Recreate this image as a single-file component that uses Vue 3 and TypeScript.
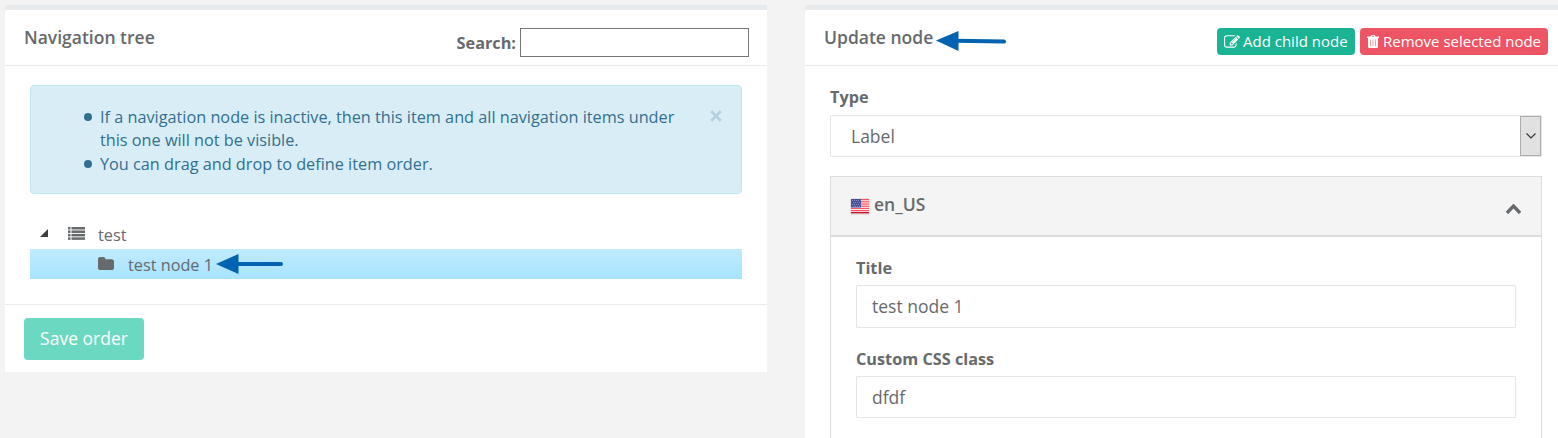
<script setup lang="ts">
import { ref } from 'vue'

const search = ref('')
const title = ref('test node 1')
const cssClass = ref('dfdf')
const notes: string[] = [
  'If a navigation node is inactive, then this item and all navigation items under this one will not be visible.',
  'You can drag and drop to define item order.',
]
const bars = [0, 3.45, 6.9, 10.35]
const stripes = [0, 2.2, 4.4, 6.6, 8.8, 11]
</script>

<template>
  <main class="page">
    <section class="panel nav-panel">
      <header class="panel-head">
        <h5 class="heading">Navigation tree</h5>
        <label class="search"><span>Search:</span><input v-model="search" type="text" class="search-input" /></label>
      </header>
      <div class="nav-body">
        <div class="alert">
          <ul class="notes">
            <li v-for="note in notes" :key="note"><i class="bullet"></i><span>{{ note }}</span></li>
          </ul>
          <button class="close" type="button" aria-label="Close">
            <svg width="12" height="12" viewBox="0 0 12 12"><path d="M1.2 1.2L10.8 10.8M10.8 1.2L1.2 10.8" /></svg>
          </button>
        </div>
        <div class="tree">
          <div class="row root">
            <svg class="caret" width="8" height="8" viewBox="0 0 8 8"><path d="M8 0V8H0Z" /></svg>
            <svg class="list" width="17" height="13" viewBox="0 0 17 13">
              <g v-for="y in bars" :key="y">
                <rect x="0" :y="y" width="2.5" height="2.5" /><rect x="3.5" :y="y" width="13.5" height="2.5" />
              </g>
            </svg>
            <span>test</span>
          </div>
          <div class="row child">
            <svg class="folder" width="16" height="13" viewBox="64 128 1664 1408" preserveAspectRatio="none"><path d="M1728 608v704q0 92-66 158t-158 66h-1216q-92 0-158-66t-66-158v-960q0-92 66-158t158-66h320q92 0 158 66t66 158v32h672q92 0 158 66t66 158z" /></svg>
            <span class="node-name">test node 1</span>
            <svg class="arrow tree-arrow" width="67" height="20" viewBox="0 0 67 20"><path d="M0 10L22.5 0V20Z" /><path class="shaft" d="M20 10H65" /></svg>
          </div>
        </div>
      </div>
      <footer class="panel-foot">
        <button type="button" class="save">Save order</button>
      </footer>
    </section>

    <section class="panel node-panel">
      <header class="panel-head">
        <h5 class="heading">Update node</h5>
        <svg class="arrow head-arrow" width="70" height="20" viewBox="0 0 70 20"><path d="M0 9.6L22.5 0V20Z" /><path class="shaft" d="M20 9.8L68 10.6" /></svg>
        <div class="actions">
          <button type="button" class="btn add">
            <svg width="16" height="16" viewBox="0 0 1792 1792"><path d="M888 1184l116-116-152-152-116 116v56h96v96h56zm440-720q-16-16-33 1l-350 350q-17 17-1 33t33-1l350-350q17-17 1-33zm80 594v190q0 119-84.500 203.500t-203.500 84.500h-832q-119 0-203.500-84.500t-84.500-203.500v-832q0-119 84.500-203.500t203.500-84.500h832q63 0 117 25 15 7 18 23 3 17-9 29l-49 49q-14 14-32 8-23-6-45-6h-832q-66 0-113 47t-47 113v832q0 66 47 113t113 47h832q66 0 113-47t47-113v-126q0-13 9-22l64-64q15-15 35-7t20 29zm-96-738l288 288-672 672h-288v-288zm444 132l-92 92-288-288 92-92q28-28 68-28t68 28l152 152q28 28 28 68t-28 68z" /></svg>
            <span>Add child node</span>
          </button>
          <button type="button" class="btn remove">
            <svg width="12" height="13" viewBox="0 0 12 13"><path fill-rule="evenodd" d="M4.300 0H7.700L8.500 1.600H12V3H11V11.500Q11 13 9.500 13H2.500Q1 13 1 11.500V3H0V1.600H3.500ZM4.900 .8L4.500 1.600H7.500L7.100 .8Z" /><path class="slots" d="M3.500 4.500V11.300M6 4.500V11.300M8.500 4.500V11.300" /></svg>
            <span>Remove selected node</span>
          </button>
        </div>
      </header>
      <div class="node-body">
        <div class="label">Type</div>
        <div class="select" role="combobox" tabindex="0">
          <span>Label</span>
          <i class="drop"><svg width="10" height="6" viewBox="0 0 10 6"><path d="M.5 .5L5 5L9.500 .5" /></svg></i>
        </div>
        <div class="locale">
          <div class="locale-head">
            <svg class="flag" width="20" height="17" viewBox="0 0 20 17">
              <rect class="flag-shadow" x="0.500" y="0.500" width="19" height="16" rx="1.500" />
              <rect class="white" x="1" y="1" width="18" height="14" />
              <rect v-for="y in stripes" :key="y" class="stripe" x="1" :y="y + 1" width="18" height="1.300" />
              <rect class="stripe-base" x="1" y="14" width="18" height="1.300" />
              <rect class="canton" x="1" y="1" width="10" height="8.500" />
              <path class="stars" d="M2 2.500H10.500M3 4.500H10.500M2 6.500H10.500M3 8.300H10.500" />
            </svg>
            <span class="locale-name">en_US</span>
            <svg class="chevron" width="15" height="10" viewBox="90 499 1612 1016" preserveAspectRatio="none"><path d="M1683 1331l-166 165q-19 19-45 19t-45-19l-531-531-531 531q-19 19-45 19t-45-19l-166-165q-19-19-19-45.500t19-45.500l742-741q19-19 45-19t45 19l742 741q19 19 19 45.500t-19 45.500z" /></svg>
          </div>
          <div class="locale-body">
            <label class="label" for="title">Title</label>
            <input id="title" v-model="title" class="field title-field" type="text" />
            <label class="label" for="css">Custom CSS class</label>
            <input id="css" v-model="cssClass" class="field" type="text" />
          </div>
        </div>
      </div>
    </section>
  </main>
</template>

<style>
body { background: #f2f2f2; overflow: hidden; }
</style>

<style scoped>
* { box-sizing: border-box; }
.page {
  height: 438px; overflow: hidden; padding: 5px 0 0 5px; display: flex; gap: 38px; align-items: flex-start;
  background: #f3f3f3; color: #676a6c; font: 16.25px/23.2px "Open Sans", "Noto Sans", sans-serif;
}
svg { display: block; flex: none; fill: currentColor; }
button, input { font-family: inherit; color: inherit; margin: 0; }
.panel { background: #fff; border-top: 5px solid #e7eaec; flex: none; }
.nav-panel { width: 762px; }
.node-panel { width: 762px; height: 460px; }
.panel-head { height: 56px; border-bottom: 1px solid #e7eaec; padding: 0 18px 0 19px; display: flex; align-items: flex-start; }
.heading { margin: 16px 0 0; font-size: 17.5px; font-weight: 600; line-height: 23px; white-space: nowrap; }
.search { margin: 18px 0 0 auto; display: flex; align-items: center; gap: 4px; font-weight: 700; }
.search span { padding-top: 2px; }
.search-input { width: 229px; height: 29px; border: 1px solid #767676; background: #fff; padding: 1px 4px; }
.nav-body { padding: 19px 25px 25px; }
.alert { height: 109px; border: 1px solid #bce8f1; border-radius: 4px; background: #d9edf7; color: #31708f; display: flex; justify-content: space-between; padding: 20px 19px 0 18px; }
.notes { margin: 0; padding: 0 0 0 35px; width: 640px; list-style: none; }
.notes li { display: flex; align-items: flex-start; gap: 8px; line-height: 23.4px; }
.bullet { width: 8px; height: 8px; margin-top: 7px; border-radius: 50%; background: #31708f; flex: none; }
.close { border: 0; padding: 0; background: none; width: 12px; height: 12px; margin-top: 4px; }
.close path { stroke: #b2d0df; stroke-width: 2.6; fill: none; }
.tree { margin-top: 25px; }
.row { height: 30px; display: flex; align-items: center; }
.root { padding-left: 10px; }
.root span, .node-name { padding-top: 3px; }
.caret { fill: #3c3f42; margin-bottom: 3px; }
.list { margin: 0 13px 2px 20px; }
.child { padding-left: 68px; background: linear-gradient(#beebff, #a8e4ff); }
.folder { margin: 0 14px 2px 0; }
.arrow { fill: #0063b1; }
.shaft { stroke: #0063b1; stroke-width: 4; stroke-linecap: round; }
.tree-arrow { margin-left: 3px; }
.panel-foot { height: 68px; border-top: 1px solid #e7eaec; padding: 13px 19px; }
.save { width: 120px; height: 42px; border: 0; border-radius: 4px; padding: 0 0 2px; background: #6bd9c1; color: #fff; font-size: 17.5px; }
.head-arrow { margin: 21px 0 0 3px; }
.node-panel .panel-head { padding-right: 19px; }
.actions { margin: 18px 0 0 auto; display: flex; gap: 5px; }
.btn { height: 27px; border: 0; border-radius: 4px; padding: 0 6px 0 7px; display: flex; align-items: center; color: #fff; font-size: 15px; line-height: 23px; white-space: nowrap; }
.add { width: 138px; background: #1ab394; gap: 3px; }
.remove { width: 188px; background: #ed5565; gap: 4px; }
.slots { stroke: #f5a3a4; stroke-width: 1; }
.node-body { padding: 20px 25px 0; }
.label { display: block; font-weight: 700; line-height: 23px; }
.select { margin-top: 6px; width: 712px; height: 42px; border: 1px solid #e5e6e7; border-radius: 1px; padding-left: 20px; display: flex; align-items: center; justify-content: space-between; font-size: 17.5px; }
.select span { padding-top: 2px; }
.drop { width: 21px; height: 40px; background: #e1e1e1; border: 1px solid #adadad; display: flex; align-items: center; justify-content: center; }
.drop path { fill: none; stroke: #333; stroke-width: 1.1; }
.locale { margin-top: 19px; border: 1px solid #ddd; width: 712px; height: 300px; }
.locale-head { height: 60px; background: #f4f4f4; border-bottom: 2px solid #ddd; display: flex; align-items: flex-start; padding: 0 20px 0 19px; }
.flag { margin-top: 21px; }
.flag-shadow { fill: #d8cdce; }
.white { fill: #fff; }
.stripe { fill: #ff5262; }
.stripe-base { fill: #d0142b; }
.canton { fill: #494e99; }
.stars { stroke: #a5a7d1; stroke-width: .7; stroke-dasharray: 1 1; fill: none; }
.locale-name { margin: 16px 0 0 4px; font-size: 17.5px; font-weight: 600; }
.chevron { margin: 27px 0 0 auto; }
.locale-body { padding: 20px 25px 0; }
.field { display: block; width: 660px; height: 42px; margin: 5px 0 20px; border: 1px solid #e5e6e7; border-radius: 1px; padding: 0 15px; font-size: 17.5px; background: #fff; }
.title-field { height: 43px; margin-bottom: 20px; padding-bottom: 2px; }
</style>
